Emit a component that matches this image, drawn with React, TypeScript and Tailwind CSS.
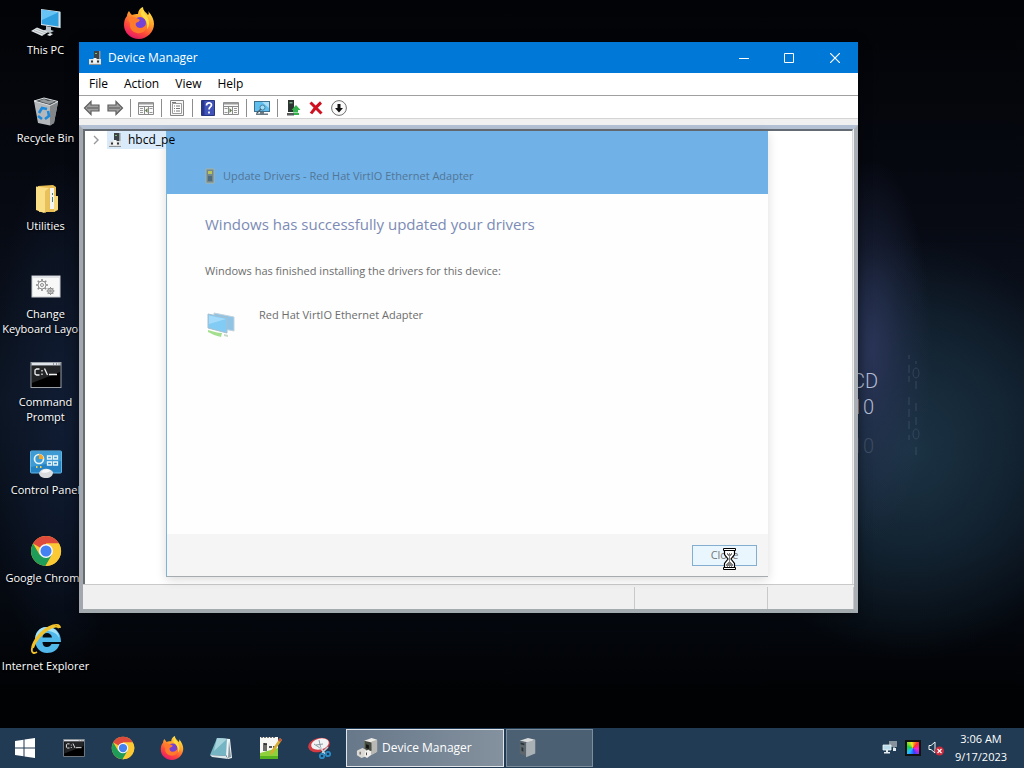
import React, { useState } from 'react';

interface IconProps {
  className?: string;
}

const ThisPcIcon: React.FC<IconProps> = ({ className }) => (
  <svg viewBox="0 0 32 32" className={className} aria-hidden="true">
    <path d="M11 2 30 4.5V21L11 18Z" fill="#d7e3ea" />
    <path d="M11.6 2.8 28.5 5.2V19.5L11.6 17Z" fill="#2f9fe0" />
    <path d="M11.6 2.8 28.5 5.2 12 13Z" fill="#67c4f5" />
    <path d="M30 4.5 31 5v16l-1 .2Z" fill="#7d8b94" />
    <path d="m16 19 5 1v3l3 1-4 2-8-2 4-1.500Z" fill="#b9c2c8" />
    <path d="M7 20.500 18 25l-6 4L1 24Z" fill="#dfe3e6" />
    <path d="m4 23.500 10 4M6 22l10 4" stroke="#98a3aa" strokeWidth=".7" />
    <path d="m20 26 3 1-3 2-3-1Z" fill="#e6eaec" />
  </svg>
);

const RecycleBinIcon: React.FC<IconProps> = ({ className }) => (
  <svg viewBox="0 0 32 32" className={className} aria-hidden="true">
    <path d="M4 6 28 7 24 28 20 30.500 8 28Z" fill="#b4b8bb" />
    <path d="m20 10 8-3-4 21-4 2.500Z" fill="#83878a" />
    <path d="M4 6 14 3l14 3.500L20 10.500Z" fill="#4a4e52" />
    <path d="M4 6 14 3l14 3.500L20 10.500Z" fill="none" stroke="#dfe2e4" />
    <path d="M9 6 14 4l4 2 5-1 1 2-5 2Z" fill="#94999c" />
    <path d="m9 18 3-5 5 1M18 16l1 5-4 3M12 24l-4-3" fill="none" stroke="#1d88d9" strokeWidth="2.600" />
  </svg>
);

const FolderIcon: React.FC<IconProps> = ({ className }) => (
  <svg viewBox="0 0 32 32" className={className} aria-hidden="true">
    <path d="M8 3 23 2l3 2v9l2 1v13l-4 2H9Z" fill="#e9bd52" />
    <path d="M20 5h4v21h-4Z" fill="#f4f5f2" />
    <path d="M22 10h1v2h-1zM22 14h1v5h-1z" fill="#4a7d6d" />
    <path d="M6 3.500 19 5v22l-5 3-8-3Z" fill="#fbdf86" />
    <path d="M19 5v22l-4 3V8Z" fill="#e8c15d" />
    <path d="M24 13h4v13l-4 3Z" fill="#f6d77a" />
  </svg>
);

const gearTeeth = [0, 45, 90, 135, 180, 225, 270, 315];

const KeyboardLayoutIcon: React.FC<IconProps> = ({ className }) => (
  <svg viewBox="0 0 32 32" className={className} aria-hidden="true">
    <rect x="2" y="5" width="28" height="21" fill="#f8f8f8" stroke="#c9ccd0" />
    <path d="M2 6h28" stroke="#dfe3e8" strokeWidth="2" />
    <g fill="none" stroke="#8d8d8d">
      <circle cx="12" cy="14" r="4" />
      <circle cx="12" cy="14" r="1.500" />
      <circle cx="20.500" cy="20" r="2.800" fill="#c9c9c9" />
      <circle cx="20.500" cy="20" r=".8" />
    </g>
    {gearTeeth.map((angle) => (
      <g key={angle}>
        <path d="M11.200 8h1.600v2h-1.600z" fill="#8d8d8d" transform={`rotate(${angle} 12 14)`} />
        <path d="M20 16h1v1.500h-1z" fill="#8d8d8d" transform={`rotate(${angle} 20.500 20)`} />
      </g>
    ))}
  </svg>
);

const CommandIcon: React.FC<IconProps> = ({ className }) => (
  <svg viewBox="0 0 32 28" className={className} aria-hidden="true">
    <rect x="1" y="1.500" width="30" height="25" fill="#000" stroke="#9aa0a6" />
    <path d="M1.500 2h29v2.500h-29z" fill="#dfe5ea" />
    <path d="M23 3h1M26 3h1M28.500 3h1" stroke="#555" />
    <path d="M2 5h28v6L2 22Z" fill="#2b2d30" opacity=".8" />
    <path
      d="M9.500 8h-3l-1.500 1v4l1.500 1h3M12 9v1.500M12 12.500V14M14.500 7.500l3 6.500M19 13.500h8"
      fill="none"
      stroke="#f2f2f2"
      strokeWidth="1.300"
    />
  </svg>
);

const ControlPanelIcon: React.FC<IconProps> = ({ className }) => (
  <svg viewBox="0 0 32 32" className={className} aria-hidden="true">
    <rect x=".5" y="4" width="31" height="22" rx="1" fill="#2583c4" stroke="#62b4e2" />
    <path d="M1 5h30v9L1 20Z" fill="#4aa5dc" opacity=".7" />
    <circle cx="9" cy="12" r="4.500" fill="none" stroke="#e6f4fc" strokeWidth="1.700" />
    <path d="M9 12V7a5 5 0 0 1 4.500 5Z" fill="#f6a623" />
    <g fill="none" stroke="#e6f4fc" strokeWidth="1.300">
      <path d="M17.500 9h4v3h-4zM23.500 9h4v3h-4zM17.500 15h4v3h-4zM23.500 15h4v3h-4z" />
    </g>
    <path d="M6 20h1.500M10 20h1.500" stroke="#f5d24b" strokeWidth="2" />
    <path d="M9 26c2-5 10-6 14-1 0 4-3 6-7 6s-7-2-7-5Z" fill="#d9dbdd" />
    <path d="M11 25c2-3 7-4 10-1-3 1-6 3-10 1Z" fill="#f8f8f8" />
  </svg>
);

const ChromeIcon: React.FC<IconProps> = ({ className }) => (
  <svg viewBox="0 0 32 32" className={className} aria-hidden="true">
    <circle cx="16" cy="16" r="15" fill="#fbc934" />
    <path d="M16 16 3 8.500A15 15 0 0 1 29 8.500H16Z" fill="#de4a3c" />
    <path d="M3 8.500A15 15 0 0 0 15.500 31l6.500-11.500L9.500 19.500Z" fill="#1f9d58" />
    <path d="M16 8.500h13A15 15 0 0 1 15.500 31L22.500 19.500Z" fill="#fbc934" />
    <circle cx="16" cy="16" r="7" fill="#f5f7fa" />
    <circle cx="16" cy="16" r="5.500" fill="#4382f0" />
  </svg>
);

const FirefoxIcon: React.FC<IconProps> = ({ className }) => (
  <svg viewBox="0 0 32 32" className={className} aria-hidden="true">
    <defs>
      <linearGradient id="fox" x1=".8" y1="0" x2=".25" y2="1">
        <stop offset="0" stopColor="#fff44f" />
        <stop offset=".35" stopColor="#ffa72b" />
        <stop offset=".7" stopColor="#ff4a3a" />
        <stop offset="1" stopColor="#ea1572" />
      </linearGradient>
    </defs>
    <path
      d="M4 9C4 7 5 5 6 4c1 2 2 3 3 4 2-1 4-1 6-1 0-3 2-6 5-7 0 4 3 5 5 8 1-1 1-2 0-4 4 4 6 9 6 13 0 8-7 15-15 15S1 26 1 18c0-4 1-7 3-9Z"
      fill="url(#fox)"
    />
    <circle cx="17" cy="16" r="6" fill="#7542d6" />
    <path d="M5 11c3-2 6-1 8 0 2 1 3 1 4 2-1 2-3 2-4 3-1 2 1 5 4 5s5-2 7-4c0 7-5 10-10 9S6 21 7 16c-1-2-2-3-2-5Z" fill="#ff7a2d" />
    <path d="M20 3c1 5 6 6 6 13 0 3-1 5-2 6 1-6-1-9-4-12-3-2-2-5 0-7Z" fill="#ffde45" />
  </svg>
);

const ExplorerIcon: React.FC<IconProps> = ({ className }) => (
  <svg viewBox="0 0 32 32" className={className} aria-hidden="true">
    <path
      fillRule="evenodd"
      d="M17 4C9 4 5 10 5 17s5 13 12 13c6 0 11-3 12.500-9H21.500c-1 2-2.500 3-4.500 3-3 0-4.500-2-4.500-5H31C31 10 26 4 17 4Zm-4.500 10.500c0-3 2-4.500 4.500-4.500s4.500 1.500 5 4.500Z"
      fill="#52b9ec"
    />
    <path d="M17 4C9 4 5 10 5 17c4-7 8-9 12-9 5 0 10 2 12 7C29 9 25 4 17 4Z" fill="#a5e1f9" />
    <path
      d="M7 29c-3 2-6 1-5-4C3 18 11 8 19 4c6-3 11-3 11 1M3 25C5 18 12 10 19 6c5-3 9-3 10-1"
      fill="none"
      stroke="#f0c12c"
      strokeWidth="1.800"
    />
  </svg>
);

const ManagerIcon: React.FC<IconProps> = ({ className }) => (
  <svg viewBox="0 0 16 16" className={className} aria-hidden="true">
    <path d="M7 1h5v8H7z" fill="#3b4348" />
    <path d="M12 1h1.500v8H12z" fill="#8f989d" />
    <path d="M8 3h2v1H8z" fill="#74c177" />
    <path d="M2 9h12v5H2z" fill="#dfe1e2" />
    <path d="M2 14h12v1H2z" fill="#8e9396" />
    <path d="M4 10.500h2v2H4zM10 10.500h2v2h-2z" fill="#2f3538" />
    <path d="M6.500 8h3v5h-3z" fill="#f4f5f5" />
  </svg>
);

const ComputerTowerIcon: React.FC<IconProps> = ({ className }) => (
  <svg viewBox="0 0 24 24" className={className} aria-hidden="true">
    <path d="m4 4 9-3 8 2-7 3Z" fill="#d9dbdc" />
    <path d="m4 4 7 2v15l-7-3Z" fill="#5c666c" />
    <path d="m11 6 10-3v15l-10 4Z" fill="#aab1b5" />
    <path d="m5 6 4 1v2L5 8ZM6 11l2 1v4l-2-1Z" fill="#28323a" />
  </svg>
);

const TaskManagerIcon: React.FC<IconProps> = ({ className }) => (
  <svg viewBox="0 0 24 24" className={className} aria-hidden="true">
    <path d="m9 4 8-3 6 2v13l-7 4-7-3Z" fill="#eceae6" />
    <path d="m17 5 6-2v13l-7 4Z" fill="#bab8b4" />
    <path d="m9 4 8 2v9l-8 1Z" fill="#444c42" />
    <path d="m11 8 3 1v4l-3-1Z" fill="#111" />
    <path d="m3 14 4-2 4 2v7l-5 2-5-3v-5Z" fill="#dcdad5" />
    <path d="m10 15 4-1 2 2v4l-4 3-3-2Z" fill="#f2f0ec" />
    <path d="M4 16h1v3H4zM11 17h1v3h-1z" fill="#3b3b3b" />
  </svg>
);

const NotepadIcon: React.FC<IconProps> = ({ className }) => (
  <svg viewBox="0 0 24 24" className={className} aria-hidden="true">
    <path d="M9 2 21 3l2 19-4 1Z" fill="#eef3f5" />
    <path d="M8 2 18 3 17 20 1 19Z" fill="#75b5c3" />
    <path d="M8 2 18 3 5 15Z" fill="#a7d4dc" />
    <path d="m1 19 16 1 2 3-16-2Z" fill="#dce7ea" />
    <path d="m20 5 2 16-3 1Z" fill="#86989f" />
  </svg>
);

const NotepadPlusIcon: React.FC<IconProps> = ({ className }) => (
  <svg viewBox="0 0 24 24" className={className} aria-hidden="true">
    <path d="M2 1h18v22H2z" fill="#f7f8f3" />
    <path d="M2 17 20 12v11H2z" fill="#8ed13c" />
    <path d="M2 20h18v3H2z" fill="#56b421" />
    <path d="M4 1v1M7 1v1M10 1v1M13 1v1M16 1v1" stroke="#777" strokeWidth="2" />
    <path d="M6 7v8M6 8h3M8 8v7M11 11h3M15 11h2" stroke="#222" strokeWidth="1.300" fill="none" />
    <path d="m22 2 2 2-9 13-3 2 1-4Z" fill="#d8ad32" />
    <path d="m22 2 2 2-2 2-2-2Z" fill="#c3523e" />
  </svg>
);

const SnipIcon: React.FC<IconProps> = ({ className }) => (
  <svg viewBox="0 0 24 24" className={className} aria-hidden="true">
    <ellipse cx="12" cy="9" rx="11" ry="7" fill="#d43a42" transform="rotate(-14 12 9)" />
    <ellipse cx="13" cy="8" rx="9" ry="5.500" fill="#f2f3f4" transform="rotate(-14 13 8)" />
    <path d="m7 8 6 4M12 4l2 9M9 9l7-1" stroke="#8c9aa2" />
    <path d="m13 11 5 7M21 11l-6 6" stroke="#c7d0d6" strokeWidth="1.500" />
    <g fill="none" stroke="#2a8cc7" strokeWidth="1.800">
      <circle cx="15" cy="20" r="2.200" />
      <circle cx="21" cy="18" r="2.200" />
    </g>
  </svg>
);

const WindowsIcon: React.FC<IconProps> = ({ className }) => (
  <svg viewBox="0 0 20 20" className={className} aria-hidden="true">
    <path d="M0 3 8.500 1.800V9.500H0ZM9.500 1.600 20 0v9.500H9.500ZM0 10.500h8.500v7.700L0 17ZM9.500 10.500H20V20L9.500 18.400Z" fill="#fff" />
  </svg>
);

const ArrowIcon: React.FC<IconProps> = ({ className }) => (
  <svg viewBox="0 0 18 16" className={className} aria-hidden="true">
    <path d="M1.500 8 8 1.500V5h8v6H8v3.500Z" fill="#a0a0a0" stroke="#5e5e5e" strokeWidth="1.200" />
    <path d="M4 8h11" stroke="#7a7a7a" strokeWidth="2" />
  </svg>
);

const TreePaneIcon: React.FC<IconProps> = ({ className }) => (
  <svg viewBox="0 0 18 16" className={className} aria-hidden="true">
    <path d="M1.500 2.500h15v12h-15z" fill="#fafafa" stroke="#8b8b8b" />
    <path d="M2 3.500h14" stroke="#9a9a9a" strokeWidth="2" />
    <path d="M2 6.500h14M7.500 7v7M11.500 7v7" stroke="#8b8b8b" />
    <path d="M3 8.500h3M3 10.500h3M3 12.500h3M12.500 8.500h3M12.500 12.500h3" stroke="#999" />
    <path d="M10.500 8v5L8 10.500Z" fill="#5f7a4a" />
  </svg>
);

const PropertiesIcon: React.FC<IconProps> = ({ className }) => (
  <svg viewBox="0 0 18 16" className={className} aria-hidden="true">
    <path d="M2.500.5h13v15h-13z" fill="#f7f7f7" stroke="#858585" />
    <path d="M4.500 3.500h9v10h-9z" fill="#fff" stroke="#9b9b9b" />
    <path d="M4 2.500h4M6 6h1M8 6h4M6 8.500h1M8 8.500h4M6 11h1M8 11h4" stroke="#777" />
  </svg>
);

const HelpIcon: React.FC<IconProps> = ({ className }) => (
  <svg viewBox="0 0 16 16" className={className} aria-hidden="true">
    <path d="M1.500.5h13v15h-13z" fill="#4053b8" stroke="#28357f" />
    <path d="M2 1h2.500v14H2z" fill="#27368c" />
    <path d="M6.500 5.500c0-3.500 5-3.500 5-.5 0 2-2.500 2-2.500 4.500M9 11.500v2" stroke="#fff" strokeWidth="1.700" fill="none" />
  </svg>
);

const ScanIcon: React.FC<IconProps> = ({ className }) => (
  <svg viewBox="0 0 18 16" className={className} aria-hidden="true">
    <path d="M1 1h16v11H1z" fill="#3f6f8d" />
    <path d="M2 2h14v9H2z" fill="#5fc0f0" />
    <path d="M9 2h7v6Z" fill="#abdff7" />
    <path d="M7 12h4v1.500h4V15H3v-1.500h4z" fill="#6b7b85" />
    <circle cx="9.500" cy="7.500" r="2.500" fill="#9fdcf8" stroke="#4f7f9a" />
    <path d="m8 9-4.500 4.500" stroke="#4b5f6b" strokeWidth="1.300" />
  </svg>
);

const UpdateIcon: React.FC<IconProps> = ({ className }) => (
  <svg viewBox="0 0 16 16" className={className} aria-hidden="true">
    <path d="M3 0h6v12H3z" fill="#2c3532" />
    <path d="M4.500 2h3v1.500h-3z" fill="#79ab82" />
    <path d="M2 13h7v2.500H2z" fill="#555c59" />
    <path d="m11 5 4.500 5H13v2.500H8V10H6.500Z" fill="#32b34b" />
    <path d="M9 14h5" stroke="#32b34b" strokeWidth="2" />
  </svg>
);

const RemoveIcon: React.FC<IconProps> = ({ className }) => (
  <svg viewBox="0 0 16 16" className={className} aria-hidden="true">
    <path d="M2.500 2.500c3 3 7 7 11 11M13 2.500C9 6 6 9 3 13.500" stroke="#cf1020" strokeWidth="3" fill="none" />
  </svg>
);

const DisableIcon: React.FC<IconProps> = ({ className }) => (
  <svg viewBox="0 0 16 16" className={className} aria-hidden="true">
    <circle cx="8" cy="8" r="7.400" fill="#fafafa" stroke="#707070" />
    <path d="M6.500 4h3v4H12l-4 4.500L4 8h2.500Z" fill="#111" />
  </svg>
);

const AdapterIcon: React.FC<IconProps> = ({ className }) => (
  <svg viewBox="0 0 32 32" className={className} aria-hidden="true">
    <path d="m9 4 20 4v14L9 18Z" fill="#8fc4e6" stroke="#c2d3dc" />
    <path d="m3 5 19 4v15L3 19Z" fill="#82cbf5" stroke="#a8bfcc" />
    <path d="M4 6.500 21 10 4 15Z" fill="#a5dbfa" />
    <path d="M3 21c5 1 9 3 14 3l-1 4C11 27 7 25 3 23Z" fill="#a4df8f" />
    <path d="m19 25 4 1v2l-4-1Z" fill="#c6d8c6" />
  </svg>
);

const DriverIcon: React.FC<IconProps> = ({ className }) => (
  <svg viewBox="0 0 10 16" className={className} aria-hidden="true">
    <path d="M1 1h8v14H1z" fill="#718791" stroke="#a9b39f" />
    <path d="M3 3h4v3H3z" fill="#b9c45c" />
    <path d="M3 8h4v5H3z" fill="#4f6b7e" />
  </svg>
);

const HourglassCursor: React.FC<IconProps> = ({ className }) => (
  <svg viewBox="0 0 13 22" className={className} aria-hidden="true">
    <path d="M1.500 2v4.500L5 11l-3.500 4.500V20h10v-4.500L8 11l3.500-4.500V2Z" fill="#fff" stroke="#000" strokeWidth="1.200" />
    <path d="M.5.500h12v2H.5zM.5 19.500h12v2H.5z" fill="#fff" stroke="#000" />
    <path d="M4 6h1M6 6h1M8 6h1M5 7h1M7 7h1M6 8h1M6 10h1M6 12h1M6 14h1M5 15h1M7 15h1M4 16h1M6 16h1M8 16h1M3 17h1M5 17h1M7 17h1M9 17h1M4 18h1M6 18h1M8 18h1" stroke="#000" />
  </svg>
);

const NetworkTrayIcon: React.FC<IconProps> = ({ className }) => (
  <svg viewBox="0 0 16 16" className={className} aria-hidden="true">
    <path d="M7 1h8v6H7zM11 7h2v3h-2z" fill="#87939c" />
    <path d="M1 5h8v5H1z" fill="#b8dbe9" stroke="#edf5f8" strokeWidth=".8" />
    <path d="M4 10h2v2h2v1.500H2V12h2zM11 8h3v3h-3z" fill="#e3edf1" />
  </svg>
);

const VolumeTrayIcon: React.FC<IconProps> = ({ className }) => (
  <svg viewBox="0 0 16 16" className={className} aria-hidden="true">
    <path d="M1 5.500h2L7 2v11L3 9.500H1Z" fill="none" stroke="#f2f5f7" />
    <circle cx="11.500" cy="11" r="4.500" fill="#c92a3c" />
    <path d="m9.500 9 4 4M13.500 9l-4 4" stroke="#fff" strokeWidth="1.200" />
  </svg>
);

const desktopIcons = [
  { label: 'This PC', Icon: ThisPcIcon },
  { label: 'Recycle Bin', Icon: RecycleBinIcon },
  { label: 'Utilities', Icon: FolderIcon },
  { label: 'Change\nKeyboard Layout', Icon: KeyboardLayoutIcon },
  { label: 'Command\nPrompt', Icon: CommandIcon },
  { label: 'Control Panel', Icon: ControlPanelIcon },
  { label: 'Google Chrome', Icon: ChromeIcon },
  { label: 'Internet Explorer', Icon: ExplorerIcon },
];

const toolbarGroups = [
  [
    { title: 'Back', Icon: ArrowIcon, className: 'h-4 w-[18px]' },
    { title: 'Forward', Icon: ArrowIcon, className: 'h-4 w-[18px] rotate-180' },
  ],
  [{ title: 'Show/Hide Console Tree', Icon: TreePaneIcon, className: 'h-4 w-[18px]' }],
  [{ title: 'Properties', Icon: PropertiesIcon, className: 'h-4 w-[18px]' }],
  [
    { title: 'Help', Icon: HelpIcon, className: 'size-4' },
    { title: 'Show/Hide Action Pane', Icon: TreePaneIcon, className: 'h-4 w-[18px] -scale-x-100' },
  ],
  [{ title: 'Scan for hardware changes', Icon: ScanIcon, className: 'h-4 w-[18px]' }],
  [
    { title: 'Update driver', Icon: UpdateIcon, className: 'size-4' },
    { title: 'Uninstall device', Icon: RemoveIcon, className: 'size-4' },
    { title: 'Disable device', Icon: DisableIcon, className: 'size-4' },
  ],
];

const pinnedApps = [
  { title: 'Command Prompt', Icon: CommandIcon, className: 'h-5 w-[22px]' },
  { title: 'Google Chrome', Icon: ChromeIcon, className: 'size-6' },
  { title: 'Firefox', Icon: FirefoxIcon, className: 'size-6' },
  { title: 'Notepad', Icon: NotepadIcon, className: 'size-6' },
  { title: 'Notepad++', Icon: NotepadPlusIcon, className: 'size-6' },
  { title: 'Snipping Tool', Icon: SnipIcon, className: 'size-6' },
];

const Wallpaper: React.FC = () => (
  <div className="absolute inset-0 overflow-hidden bg-[linear-gradient(180deg,#020306_0%,#070a13_30%,#0c1522_55%,#070d17_75%,#010204_95%)]">
    <div className="absolute inset-0 bg-[radial-gradient(ellipse_60px_190px_at_872px_350px,#2a3457_0%,rgba(42,52,87,0.4)_50%,transparent_100%),radial-gradient(ellipse_190px_210px_at_910px_450px,#1b3344_0%,rgba(27,51,68,0.5)_55%,transparent_100%),radial-gradient(ellipse_70px_260px_at_60px_420px,#101c33_0%,transparent_100%)]" />
    <div className="absolute top-[368px] right-[146px] text-right font-['Liberation_Sans_Narrow','Roboto',sans-serif] text-[20px] leading-[26px] font-light text-[#b3bdd4]">
      <div>CD</div>
      <div className="pr-1">10</div>
      <div className="mt-3 -scale-y-100 pr-1 opacity-20" aria-hidden="true">10</div>
    </div>
    <svg viewBox="0 0 24 110" className="absolute top-[355px] left-[901px] h-[110px] w-6" aria-hidden="true">
      <path d="M8 0v4M8 10v8M8 21v6M15 6v3M15 26v8M8 42v8M8 54v8M8 66v8M8 80v5M15 48v8M15 62v8M15 92v8" stroke="#50647a" opacity=".5" />
      <ellipse cx="15" cy="18" rx="3" ry="5" fill="none" stroke="#50647a" opacity=".4" />
      <ellipse cx="15" cy="79" rx="3" ry="5" fill="none" stroke="#50647a" opacity=".4" />
    </svg>
  </div>
);

const UpdateDriversDialog: React.FC<{ onClose: () => void }> = ({ onClose }) => (
  <section
    aria-label="Update Drivers"
    className="absolute top-[89px] left-[87px] flex h-[446px] w-[602px] flex-col border-b border-l border-b-[#a5abae] border-l-[#78b7d4] bg-[#fefefe] shadow-[0_3px_10px_rgba(0,0,0,0.14)]"
  >
    <header className="flex h-[63px] shrink-0 items-end gap-2 bg-[#70b1e8] pb-[10px] pl-[38px] text-[#527696]">
      <DriverIcon className="h-4 w-[10px]" />
      <span className="leading-4">Update Drivers - Red Hat VirtIO Ethernet Adapter</span>
    </header>
    <div className="flex-1 pl-[38px]">
      <h2 className="mt-5 text-[15px] leading-5 text-[#7c8bb5]">Windows has successfully updated your drivers</h2>
      <p className="mt-[29px] leading-4 text-[#6d6d6d]">Windows has finished installing the drivers for this device:</p>
      <div className="mt-7 flex gap-[22px]">
        <AdapterIcon className="mt-0.5 size-8" />
        <span className="leading-4 text-[#6d6d6d]">Red Hat VirtIO Ethernet Adapter</span>
      </div>
    </div>
    <footer className="flex h-[42px] shrink-0 items-center justify-end bg-[#f5f5f5] pr-[11px]">
      <button
        type="button"
        onClick={onClose}
        className="h-[21px] w-[65px] cursor-wait border border-[#84aecf] bg-[#eaf6fd] text-[#777]"
      >
        Close
      </button>
    </footer>
    <HourglassCursor className="pointer-events-none absolute right-8 bottom-1.5 h-[22px] w-[13px]" />
  </section>
);

const DeviceManagerWindow: React.FC = () => {
  const [dialogOpen, setDialogOpen] = useState(true);

  return (
    <main className="absolute top-[42px] left-[79px] flex h-[571px] w-[779px] flex-col bg-white text-black shadow-[0_2px_10px_rgba(0,0,0,0.5)]">
      <header className="flex h-[31px] shrink-0 items-center bg-[#0078d7] pl-2 text-white">
        <ManagerIcon className="mr-[5px] size-4" />
        <h1 className="flex-1 text-xs">Device Manager</h1>
        <button type="button" aria-label="Minimize" className="flex h-full w-[45px] items-center justify-center">
          <svg viewBox="0 0 10 10" className="size-[10px]"><path d="M0 5.500h10" stroke="#fff" /></svg>
        </button>
        <button type="button" aria-label="Maximize" className="flex h-full w-[45px] items-center justify-center">
          <svg viewBox="0 0 10 10" className="size-[10px]"><path d="M.5.500h9v9h-9z" fill="none" stroke="#fff" /></svg>
        </button>
        <button type="button" aria-label="Close window" className="flex h-full w-[47px] items-center justify-center">
          <svg viewBox="0 0 10 10" className="size-[10px]"><path d="m0 0 10 10M10 0 0 10" stroke="#fff" strokeWidth="1.200" /></svg>
        </button>
      </header>

      <nav className="flex h-[22px] shrink-0 items-center gap-4 pl-[10px] text-xs">
        <button type="button">File</button>
        <button type="button">Action</button>
        <button type="button">View</button>
        <button type="button">Help</button>
      </nav>

      <div className="flex h-6 shrink-0 items-center border-y border-t-[#a0a0a0] border-b-[#d4d4d4] pt-0.5 pl-px">
        {toolbarGroups.map((group, i) => (
          <React.Fragment key={i}>
            {i > 0 && <div className="mr-[3px] ml-1 h-[18px] w-px bg-[#8d8d8d]" />}
            {group.map(({ title, Icon, className }) => (
              <button key={title} type="button" aria-label={title} className="flex w-[23px] items-center justify-center">
                <Icon className={className} />
              </button>
            ))}
          </React.Fragment>
        ))}
      </div>
      <div className="h-[6px] shrink-0 bg-[#f0f0f0]" />

      <div className="flex min-h-0 flex-1 flex-col border-4 border-t-[#b4c0d3] border-r-[#a9afb4] border-b-[#a4abaf] border-l-[#a2a8ad] bg-[#f0f0f0]">
        <div className="mr-px flex-1 border-t-2 border-r border-l-2 border-t-[#646b73] border-r-[#d9d9d9] border-l-[#686d72] bg-white">
          <div className="flex h-[18px] items-center pl-[7px]">
            <svg viewBox="0 0 8 10" className="mr-[7px] h-[10px] w-2"><path d="m2 1 4 4-4 4" fill="none" stroke="#999" strokeWidth="1.400" /></svg>
            <div className="relative z-10 flex h-[18px] w-[59px] items-center gap-[5px] bg-[#d9ebfa]">
              <ManagerIcon className="size-4 shrink-0" />
              <span className="text-xs whitespace-nowrap">hbcd_pe</span>
            </div>
          </div>
        </div>
        <div className="flex h-[25px] shrink-0 border-t border-[#c9c9c9] pt-0.5">
          <div className="flex-1 border-r border-[#c9c9c9]" />
          <div className="w-[133px] border-r border-[#c9c9c9]" />
          <div className="w-[86px] border-r border-[#c9c9c9]" />
        </div>
      </div>

      {dialogOpen && <UpdateDriversDialog onClose={() => setDialogOpen(false)} />}
    </main>
  );
};

const Taskbar: React.FC = () => (
  <footer className="relative flex h-10 shrink-0 items-center bg-[#203b53] text-white">
    <button type="button" aria-label="Start" className="flex h-full w-[49px] items-center justify-center">
      <WindowsIcon className="size-5" />
    </button>
    {pinnedApps.map(({ title, Icon, className }) => (
      <button key={title} type="button" aria-label={title} className="flex h-full w-[49px] items-center justify-center">
        <Icon className={className} />
      </button>
    ))}
    <button
      type="button"
      className="ml-[3px] flex h-[38px] w-[158px] items-center gap-1 border border-[#dfe5ea] bg-linear-to-r from-[#67788a] to-[#84919e] pl-[9px] text-xs"
    >
      <TaskManagerIcon className="size-[22px]" />
      Device Manager
    </button>
    <button
      type="button"
      aria-label="Update Drivers"
      className="ml-0.5 flex h-[38px] w-[87px] items-center border border-[#7c8e9c] bg-[#4b6072] pl-[9px]"
    >
      <ComputerTowerIcon className="size-[22px]" />
    </button>
    <div className="ml-auto flex items-center gap-[7px] pr-[13px]">
      <NetworkTrayIcon className="size-4" />
      <div className="size-4 border-2 border-[#111] bg-[conic-gradient(from_45deg,#ff3030,#ff20d0,#3040ff,#20c0ff,#20d040,#f0f020,#ff3030)]" />
      <VolumeTrayIcon className="size-4" />
      <time dateTime="2023-09-17T03:06" className="w-[60px] text-center leading-[18px]">
        3:06 AM
        <br />
        9/17/2023
      </time>
    </div>
  </footer>
);

export default function App() {
  return (
    <div className="flex h-screen flex-col overflow-hidden bg-black font-['Open_Sans','Noto_Sans',sans-serif] text-[11px]">
      <div className="relative min-h-0 flex-1">
        <Wallpaper />
        <div className="relative flex">
          <div className="grid auto-rows-[88px] grid-cols-[91px] pt-[7px]">
            {desktopIcons.map(({ label, Icon }) => (
              <button
                key={label}
                type="button"
                className="flex flex-col items-center gap-[3px] leading-[15px] text-white [text-shadow:0_1px_2px_#000]"
              >
                <Icon className="size-8 shrink-0" />
                <span className="whitespace-pre">{label}</span>
              </button>
            ))}
          </div>
          <button type="button" aria-label="Firefox" className="flex w-[95px] justify-center self-start pt-[7px]">
            <FirefoxIcon className="size-8" />
          </button>
        </div>
        <DeviceManagerWindow />
      </div>
      <Taskbar />
    </div>
  );
}
